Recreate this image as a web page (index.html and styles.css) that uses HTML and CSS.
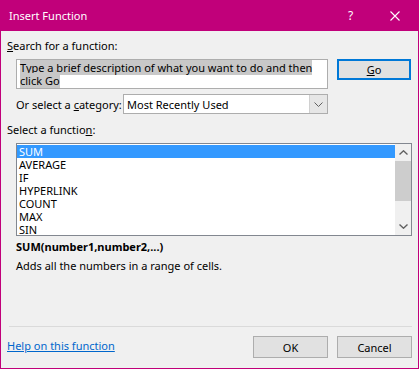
FILE: index.html
```html
<!DOCTYPE html>
<html lang="en">
<head>
    <meta charset="UTF-8">
    <title>Insert Function</title>
    <link rel="stylesheet" href="styles.css">
</head>
<body>
    <div class="window">
        <div class="titlebar">
            <span class="title">Insert Function</span>
            <span class="help-btn">?</span>
            <span class="close-btn">
                <svg width="10" height="10" viewBox="0 0 10 10">
                    <path d="M0.5 0.5 L9.5 9.5 M9.5 0.5 L0.5 9.5" stroke="#fff" stroke-width="1.1" fill="none"/>
                </svg>
            </span>
        </div>

        <div class="content">
            <div class="label"><u>S</u>earch for a function:</div>

            <div class="search-row">
                <div class="search-box">
                    <span class="selected-text">Type a brief description of what you want to do and then</span><br>
                    <span class="selected-text">click Go</span>
                </div>
                <div class="btn btn-default"><u>G</u>o</div>
            </div>

            <div class="category-row">
                <span class="category-label">Or select a <u>c</u>ategory:</span>
                <div class="select">
                    <span class="select-value">Most Recently Used</span>
                    <span class="select-arrow">
                        <svg width="9" height="5" viewBox="0 0 9 5">
                            <path d="M0.5 0.5 L4.5 4.5 L8.5 0.5" stroke="#606060" fill="none"/>
                        </svg>
                    </span>
                </div>
            </div>

            <div class="label label-list">Select a functio<u>n</u>:</div>

            <div class="listbox">
                <div class="list-items">
                    <div class="item selected">SUM</div>
                    <div class="item">AVERAGE</div>
                    <div class="item">IF</div>
                    <div class="item">HYPERLINK</div>
                    <div class="item">COUNT</div>
                    <div class="item">MAX</div>
                    <div class="item">SIN</div>
                </div>
                <div class="scrollbar">
                    <span class="scroll-arrow">
                        <svg width="9" height="5" viewBox="0 0 9 5">
                            <path d="M0.5 4.5 L4.5 0.8 L8.5 4.5" stroke="#606060" stroke-width="1.4" fill="none"/>
                        </svg>
                    </span>
                    <span class="scroll-track"><span class="scroll-thumb"></span></span>
                    <span class="scroll-arrow">
                        <svg width="9" height="5" viewBox="0 0 9 5">
                            <path d="M0.5 0.5 L4.5 4.2 L8.5 0.5" stroke="#606060" stroke-width="1.4" fill="none"/>
                        </svg>
                    </span>
                </div>
            </div>

            <div class="syntax">SUM(number1,number2,...)</div>
            <div class="description">Adds all the numbers in a range of cells.</div>

            <div class="separator"></div>

            <div class="footer">
                <a class="help-link" href="#">Help on this function</a>
                <div class="buttons">
                    <div class="btn">OK</div>
                    <div class="btn">Cancel</div>
                </div>
            </div>
        </div>
    </div>
</body>
</html>
```

FILE: styles.css
```css
body {
    margin: 0;
    padding: 0;
    font-family: "Noto Sans", "Open Sans", sans-serif;
    font-size: 11px;
    color: #000;
    background-color: #f0f0f0;
}
.window {
    width: 419px;
    height: 369px;
    box-sizing: border-box;
    border: 1px solid #c1007a;
    border-top: none;
    background-color: #f0f0f0;
    display: flex;
    flex-direction: column;
    white-space: nowrap;
}
.titlebar {
    height: 31px;
    margin: 0 -1px;
    background-color: #c1007a;
    color: #fff;
    display: flex;
    align-items: center;
    padding-left: 9px;
    flex-shrink: 0;
}
.title {
    font-size: 11px;
    flex: 1;
}
.help-btn {
    width: 12px;
    font-size: 12px;
    margin-right: 30px;
}
.close-btn {
    display: flex;
    margin-right: 19px;
}
.content {
    flex: 1;
    padding: 0 6px;
    display: flex;
    flex-direction: column;
}
.label {
    height: 14px;
    line-height: 14px;
    margin-top: 8px;
}
.search-row {
    display: flex;
    margin-top: 6px;
    margin-left: 9px;
    gap: 9px;
    align-items: flex-start;
}
.search-box {
    width: 312px;
    height: 30px;
    box-sizing: border-box;
    border: 1px solid #adadad;
    background-color: #fff;
    padding: 1px 3px;
    line-height: 13px;
}
.selected-text {
    background-color: #c8c8c8;
}
.btn {
    width: 75px;
    height: 22px;
    box-sizing: border-box;
    border: 1px solid #adadad;
    background-color: #e1e1e1;
    display: flex;
    align-items: center;
    justify-content: center;
}
.btn-default {
    width: 74px;
    height: 21px;
    border: 2px solid #0078d7;
}
.category-row {
    display: flex;
    align-items: center;
    margin-top: 5px;
    margin-left: 9px;
    height: 20px;
}
.category-label {
    width: 107px;
}
.select {
    width: 205px;
    height: 20px;
    box-sizing: border-box;
    border: 1px solid #adadad;
    background-color: #fff;
    display: flex;
    align-items: center;
}
.select-value {
    flex: 1;
    padding-left: 3px;
}
.select-arrow {
    width: 17px;
    height: 18px;
    background-color: #e6e6e6;
    border-left: 1px solid #d0d0d0;
    display: flex;
    align-items: center;
    justify-content: center;
}
.label-list {
    margin-top: 9px;
}
.listbox {
    margin-top: 6px;
    margin-left: 9px;
    width: 396px;
    height: 93px;
    box-sizing: border-box;
    border: 1px solid #828790;
    background-color: #fff;
    display: flex;
}
.list-items {
    flex: 1;
    padding-top: 1px;
}
.item {
    height: 13px;
    line-height: 13px;
    padding-left: 2px;
}
.item.selected {
    background-color: #3399ff;
    color: #fff;
}
.scrollbar {
    width: 16px;
    background-color: #f0f0f0;
    display: flex;
    flex-direction: column;
}
.scroll-arrow {
    height: 17px;
    display: flex;
    align-items: center;
    justify-content: center;
}
.scroll-track {
    flex: 1;
    display: flex;
    flex-direction: column;
}
.scroll-thumb {
    height: 40px;
    background-color: #cdcdcd;
}
.syntax {
    margin-top: 4px;
    margin-left: 9px;
    font-weight: bold;
    height: 14px;
    line-height: 14px;
}
.description {
    margin-top: 5px;
    margin-left: 9px;
    height: 14px;
    line-height: 14px;
}
.separator {
    margin-top: 53px;
    margin-left: 2px;
    height: 1px;
    background-color: #dadada;
}
.footer {
    display: flex;
    align-items: center;
    justify-content: space-between;
    margin-top: 9px;
}
.help-link {
    color: #0066cc;
    text-decoration: underline;
    margin-bottom: 4px;
}
.buttons {
    display: flex;
    gap: 9px;
}
```
